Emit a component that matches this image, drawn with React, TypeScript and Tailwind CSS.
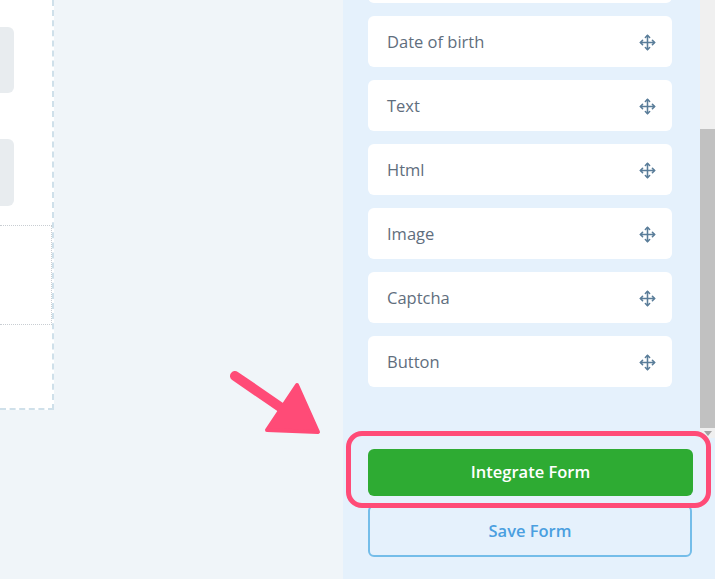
import { Move } from 'lucide-react'

const fields = ['Date of birth', 'Text', 'Html', 'Image', 'Captcha', 'Button']

function FieldCard({ label }: { label: string }): JSX.Element {
  return (
    <div className="mt-[13px] flex h-[51px] shrink-0 items-center justify-between rounded-md bg-white pl-[19px] pr-[16px] pt-[2px]">
      <span className="text-[16.5px] text-[#5f6e7d]">{label}</span>
      <Move size={17} strokeWidth={2.2} className="text-[#5a7d99]" />
    </div>
  )
}

function Canvas(): JSX.Element {
  return (
    <div className="flex h-[410px] w-[54px] flex-col border-b-2 border-r-2 border-dashed border-[#cfe0ea] bg-white">
      <div className="mt-[27px] h-[66px] w-[14px] rounded-r-md bg-[#e8ecef]" />
      <div className="mt-[46px] h-[67px] w-[14px] rounded-r-md bg-[#e8ecef]" />
      <div className="mt-[19px] h-[100px] w-[52px] border-y border-r border-dotted border-[#c8cdd2]" />
    </div>
  )
}

export default function App(): JSX.Element {
  return (
    <div
      className="relative flex h-[579px] w-[715px] overflow-hidden bg-[#f0f5f9]"
      style={{ fontFamily: '"Open Sans", "Noto Sans", sans-serif' }}
    >
      <div className="w-[343px] shrink-0">
        <Canvas />
      </div>

      <div className="flex w-[372px] shrink-0 flex-col bg-[#e5f1fc]">
        <div className="flex h-[438px] shrink-0">
          <div className="flex w-[329px] flex-col pl-[25px]">
            {/* previous field, scrolled almost out of view */}
            <div className="-mt-[48px] h-[51px] shrink-0 rounded-md bg-white" />
            {fields.map((f) => (
              <FieldCard key={f} label={f} />
            ))}
          </div>
          <div className="ml-auto flex w-[15px] flex-col bg-[#f0f0f0]">
            <div className="mt-[129px] h-[299px] w-full bg-[#c1c1c1]" />
            <div className="mx-auto mt-[3px] h-0 w-0 border-x-[4px] border-t-[5px] border-x-transparent border-t-[#a3a3a3]" />
          </div>
        </div>
        <div className="flex flex-col gap-[9px] pl-[25px] pt-[11px]">
          <button className="h-[47px] w-[325px] rounded-md bg-[#2eab33] text-[16.5px] font-semibold text-white">
            Integrate Form
          </button>
          <button className="h-[52px] w-[324px] rounded-md border-2 border-[#74bde9] text-[16.5px] font-semibold text-[#4a9fe0]">
            Save Form
          </button>
        </div>
      </div>

      <div className="absolute left-[346px] top-[431px] h-[77px] w-[365px] rounded-[16px] border-[5px] border-[#ff4b77]" />

      <svg className="absolute left-[225px] top-[365px]" width="100" height="75" viewBox="225 365 100 75">
        <line x1="235" y1="376" x2="286" y2="411" stroke="#ff4b77" strokeWidth="10" strokeLinecap="round" />
        <path
          d="M297 385 L318 432 L267 430 Z"
          fill="#ff4b77"
          stroke="#ff4b77"
          strokeWidth="4"
          strokeLinejoin="round"
        />
      </svg>
    </div>
  )
}
